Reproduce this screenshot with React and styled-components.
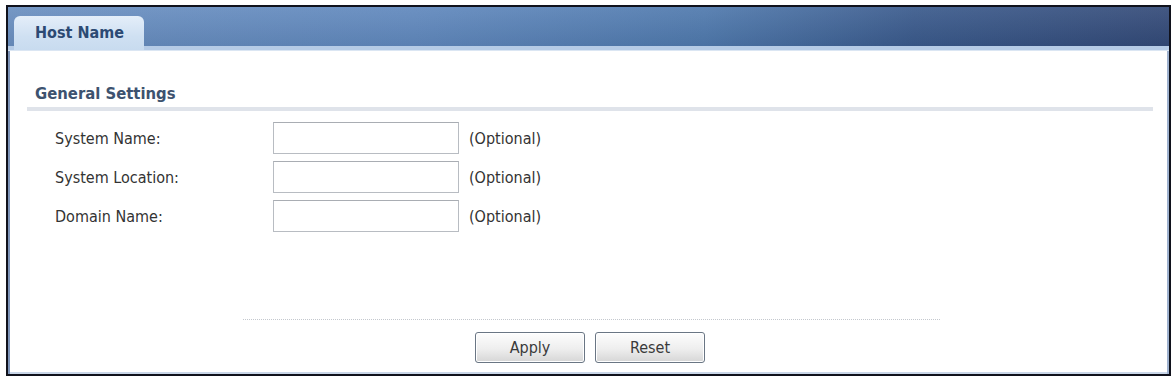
import React from "react";
import styled, { createGlobalStyle } from "styled-components";

const GlobalStyle = createGlobalStyle`
  body {
    margin: 0;
    background: #ffffff;
    font-family: "DejaVu Sans Condensed", "DejaVu Sans", sans-serif;
  }
`;

const Page = styled.div`
  width: 1176px;
  height: 381px;
  overflow: hidden;
  background: #ffffff;
  padding-top: 5px;
  box-sizing: border-box;
`;

const Frame = styled.div`
  margin-left: 6px;
  width: 1161px;
  height: 367px;
  border: 2px solid #10121c;
  box-shadow: inset 2px 0 0 #7d94b8, inset -2px 0 0 #9fb2cf, inset 0 -2px 0 #c9d6e8;
  display: flex;
  flex-direction: column;
  background: #ffffff;
`;

const Header = styled.div`
  height: 39px;
  display: flex;
  align-items: flex-end;
  padding-left: 6px;
  background:
    linear-gradient(to bottom, rgba(255,255,255,0.08), rgba(0,0,0,0.06)),
    linear-gradient(to right, #6a8fc0 0%, #6088bd 35%, #4f79ad 60%, #3a5a8c 78%, #334a78 100%);
  border-bottom: 4px solid #b5cbe6;
  box-shadow: 0 1px 0 #dbe6f3;
`;

const Tab = styled.div`
  width: 130px;
  height: 34px;
  margin-bottom: -4px;
  box-sizing: border-box;
  padding: 7px 0 0 21px;
  border-radius: 6px 6px 0 0;
  background: linear-gradient(to bottom, #e4eef9, #cfe0f2 60%, #c8dbef);
  font-size: 16px;
  font-weight: bold;
  color: #2c4a73;
`;

const Body = styled.div`
  flex: 1;
  display: flex;
  flex-direction: column;
  padding: 0 16px 0 19px;
`;

const SectionTitle = styled.div`
  margin-top: 34px;
  padding-left: 8px;
  font-size: 16.5px;
  font-weight: bold;
  color: #3d526f;
  line-height: 19px;
`;

const SectionBar = styled.div`
  margin-top: 4px;
  height: 4px;
  background: #dfe3ea;
`;

const Form = styled.div`
  display: flex;
  flex-direction: column;
  gap: 7px;
  margin-top: 11px;
`;

const Row = styled.div`
  display: grid;
  grid-template-columns: 218px 196px auto;
  align-items: center;
  padding-left: 28px;
  font-size: 16px;
  color: #333333;
`;

const Input = styled.input`
  width: 186px;
  height: 32px;
  box-sizing: border-box;
  border: 1px solid #b8bcc2;
  border-top-color: #a9adb3;
  background: #ffffff;
  outline: none;
`;

const Divider = styled.div`
  margin: auto 0 0 216px;
  width: 697px;
  border-top: 1px dotted #c4c8ce;
`;

const Buttons = styled.div`
  display: flex;
  gap: 10px;
  margin: 12px 0 11px 448px;
`;

const Button = styled.button`
  width: 110px;
  height: 31px;
  border: 1px solid #6a7684;
  border-radius: 3px;
  background: linear-gradient(to bottom, #fdfdfd 0%, #eeeeee 55%, #d6d6d6 100%);
  box-shadow: inset 0 0 0 1px #ffffff;
  font-family: "DejaVu Sans Condensed", "DejaVu Sans", sans-serif;
  font-size: 16px;
  color: #3a3a3a;
  padding: 0;
`;

const fields = ["System Name:", "System Location:", "Domain Name:"];

export default function App() {
  return (
    <Page>
      <GlobalStyle />
      <Frame>
        <Header>
          <Tab>Host Name</Tab>
        </Header>
        <Body>
          <SectionTitle>General Settings</SectionTitle>
          <SectionBar />
          <Form>
            {fields.map((f) => (
              <Row key={f}>
                <span>{f}</span>
                <Input type="text" />
                <span>(Optional)</span>
              </Row>
            ))}
          </Form>
          <Divider />
          <Buttons>
            <Button>Apply</Button>
            <Button>Reset</Button>
          </Buttons>
        </Body>
      </Frame>
    </Page>
  );
}
